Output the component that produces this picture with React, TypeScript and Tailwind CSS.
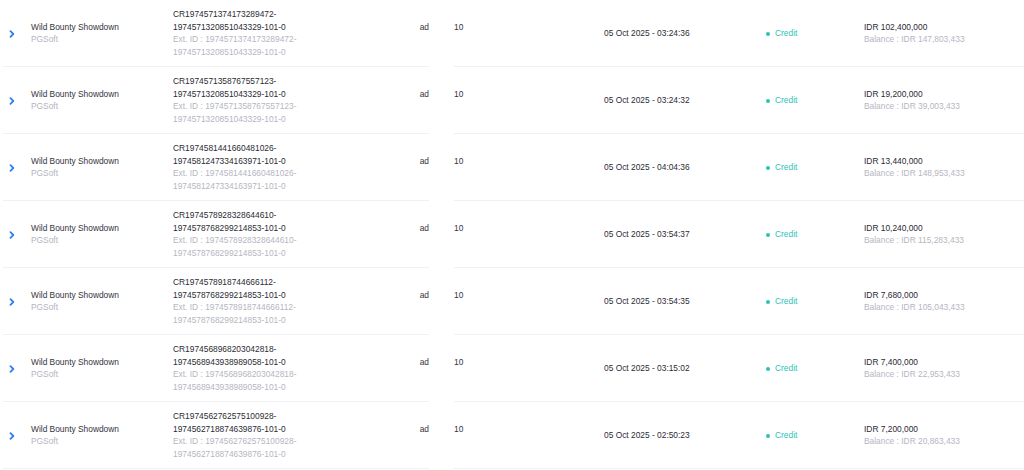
import React from 'react';

type Txn = {
  cr: string;
  ref: string;
  date: string;
  amount: string;
  balance: string;
};

const TXNS: Txn[] = [
  { cr: '1974571374173289472', ref: '1974571320851043329-101-0', date: '05 Oct 2025 - 03:24:36', amount: 'IDR 102,400,000', balance: 'IDR 147,803,433' },
  { cr: '1974571358767557123', ref: '1974571320851043329-101-0', date: '05 Oct 2025 - 03:24:32', amount: 'IDR 19,200,000', balance: 'IDR 39,003,433' },
  { cr: '1974581441660481026', ref: '1974581247334163971-101-0', date: '05 Oct 2025 - 04:04:36', amount: 'IDR 13,440,000', balance: 'IDR 148,953,433' },
  { cr: '1974578928328644610', ref: '1974578768299214853-101-0', date: '05 Oct 2025 - 03:54:37', amount: 'IDR 10,240,000', balance: 'IDR 115,283,433' },
  { cr: '1974578918744666112', ref: '1974578768299214853-101-0', date: '05 Oct 2025 - 03:54:35', amount: 'IDR 7,680,000', balance: 'IDR 105,043,433' },
  { cr: '1974568968203042818', ref: '1974568943938989058-101-0', date: '05 Oct 2025 - 03:15:02', amount: 'IDR 7,400,000', balance: 'IDR 22,953,433' },
  { cr: '1974562762575100928', ref: '1974562718874639876-101-0', date: '05 Oct 2025 - 02:50:23', amount: 'IDR 7,200,000', balance: 'IDR 20,863,433' },
];

const cell = 'h-[67px] border-b border-[#f0f0f5] flex items-center';

const Chevron = () => (
  <svg width="6" height="8" viewBox="0 0 6 8" className="mt-[1px]">
    <path d="M1.5 1.2 L4.3 4 L1.5 6.8" fill="none" stroke="#2f7ff0" strokeWidth="1.8" strokeLinecap="round" strokeLinejoin="round" />
  </svg>
);

const Row: React.FC<{ t: Txn }> = ({ t }) => (
  <>
    <div className={`${cell} pl-[6px]`}>
      <Chevron />
    </div>
    <div className={`${cell} pl-[9px]`}>
      <div>
        <div className="text-[#34343e]">Wild Bounty Showdown</div>
        <div className="text-[#b4b4bd]">PGSoft</div>
      </div>
    </div>
    <div className={`${cell} pl-[8px]`}>
      <div>
        <div className="text-[#2b2b34]">CR{t.cr}-</div>
        <div className="text-[#2b2b34]">{t.ref}</div>
        <div className="text-[#b6b6bf]">Ext. ID : {t.cr}-</div>
        <div className="text-[#b6b6bf]">{t.ref}</div>
      </div>
    </div>
    <div className={`${cell} justify-end`}>
      <div className="pb-[12px] text-[#34343e]">ad</div>
    </div>
    <div className="h-[67px]" />
    <div className={cell}>
      <div className="pb-[12px] text-[#34343e]">10</div>
    </div>
    <div className={`${cell} pl-[14px]`}>
      <div className="text-[#2b2b34]">{t.date}</div>
    </div>
    <div className={`${cell} pl-[16px]`}>
      <span className="mr-[5px] mt-[1px] h-[4px] w-[4px] rounded-full bg-[#2cc3b5]" />
      <span className="text-[#2cc3b5]">Credit</span>
    </div>
    <div className={`${cell} pl-[9px]`}>
      <div>
        <div className="text-[#2b2b34]">{t.amount}</div>
        <div className="text-[#b6b6bf]">Balance : {t.balance}</div>
      </div>
    </div>
  </>
);

const App: React.FC = () => {
  return (
    <div className="h-[470px] w-full overflow-hidden bg-white font-['Liberation_Sans',Arial,sans-serif] text-[8.4px] leading-[12.5px]">
      <div className="ml-[3px] grid grid-cols-[19px_143px_235px_29px_25px_136px_160px_105px_1fr]">
        {TXNS.map((t) => (
          <Row key={t.cr} t={t} />
        ))}
      </div>
    </div>
  );
};

export default App;
